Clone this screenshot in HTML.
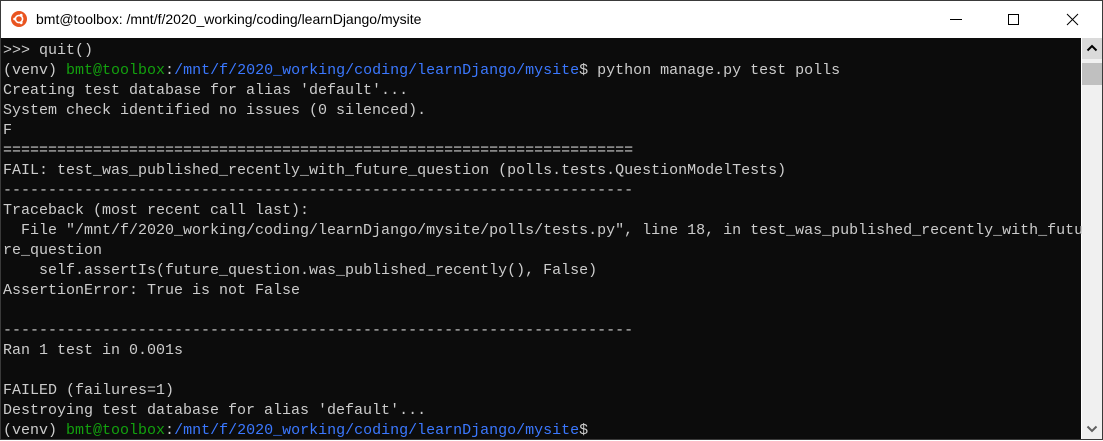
<!DOCTYPE html>
<html><head><style>
body{margin:0;width:1103px;height:440px;overflow:hidden;background:#fff;position:relative;font-family:"Liberation Sans",sans-serif}
.win{position:absolute;left:0;top:0;width:1101px;height:438px;border:1px solid #3a3a3a;}
.title{position:absolute;left:0;top:0;width:1101px;height:37px;background:#fff}
.logo{position:absolute;left:10px;top:10px;width:16px;height:16px;border-radius:50%;background:#e95420}
.tt{position:absolute;left:35px;top:10px;font-size:14px;color:#000}
.term{position:absolute;left:0;top:37px;width:1080px;height:401px;background:#0c0c0c}
pre{margin:0;position:absolute;left:2px;top:3px;font-family:"Liberation Mono",monospace;font-size:15px;line-height:20px;color:#cccccc}
.g{color:#13a10e}.b{color:#3b78ff}
.sb{position:absolute;left:1081px;top:37px;width:20px;height:401px;background:#f0f0f0}
</style></head><body>
<div class="win">
<div class="title"><div class="logo"><svg width="16" height="16" viewBox="0 0 16 16"><circle cx="8" cy="8" r="3.6" fill="none" stroke="#fff" stroke-width="1.6"/><circle cx="3.6" cy="8" r="1.4" fill="#fff"/><circle cx="10.2" cy="4.2" r="1.4" fill="#fff"/><circle cx="10.2" cy="11.8" r="1.4" fill="#fff"/></svg></div><div class="tt">bmt@toolbox: /mnt/f/2020_working/coding/learnDjango/mysite</div>
<svg style="position:absolute;left:948px;top:12px" width="14" height="14"><line x1="1" y1="6.5" x2="13" y2="6.5" stroke="#000"/></svg>
<svg style="position:absolute;left:1006px;top:12px" width="14" height="14"><rect x="1.5" y="1.5" width="10" height="10" fill="none" stroke="#000"/></svg>
<svg style="position:absolute;left:1065px;top:12px" width="14" height="14"><path d="M1 1L12 12M12 1L1 12" stroke="#000"/></svg>
</div>
<div class="term"><pre>&gt;&gt;&gt; quit()
(venv) <span class="g">bmt@toolbox</span>:<span class="b">/mnt/f/2020_working/coding/learnDjango/mysite</span>$ python manage.py test polls
Creating test database for alias 'default'...
System check identified no issues (0 silenced).
F
======================================================================
FAIL: test_was_published_recently_with_future_question (polls.tests.QuestionModelTests)
----------------------------------------------------------------------
Traceback (most recent call last):
  File "/mnt/f/2020_working/coding/learnDjango/mysite/polls/tests.py", line 18, in test_was_published_recently_with_futu
re_question
    self.assertIs(future_question.was_published_recently(), False)
AssertionError: True is not False

----------------------------------------------------------------------
Ran 1 test in 0.001s

FAILED (failures=1)
Destroying test database for alias 'default'...
(venv) <span class="g">bmt@toolbox</span>:<span class="b">/mnt/f/2020_working/coding/learnDjango/mysite</span>$</pre></div>
<div class="sb">
<div style="position:absolute;left:0;top:0;width:20px;height:21px;background:#dadada"></div>
<svg style="position:absolute;left:4px;top:6px" width="12" height="8"><path d="M1.5 6.5L6 2L10.5 6.5" fill="none" stroke="#000" stroke-width="2"/></svg>
<div style="position:absolute;left:0;top:25px;width:20px;height:22px;background:#c0c0c0"></div>
<svg style="position:absolute;left:4px;top:387px" width="12" height="8"><path d="M1.5 1.5L6 6L10.5 1.5" fill="none" stroke="#606060" stroke-width="2"/></svg>
</div>
</div>
</body></html>
